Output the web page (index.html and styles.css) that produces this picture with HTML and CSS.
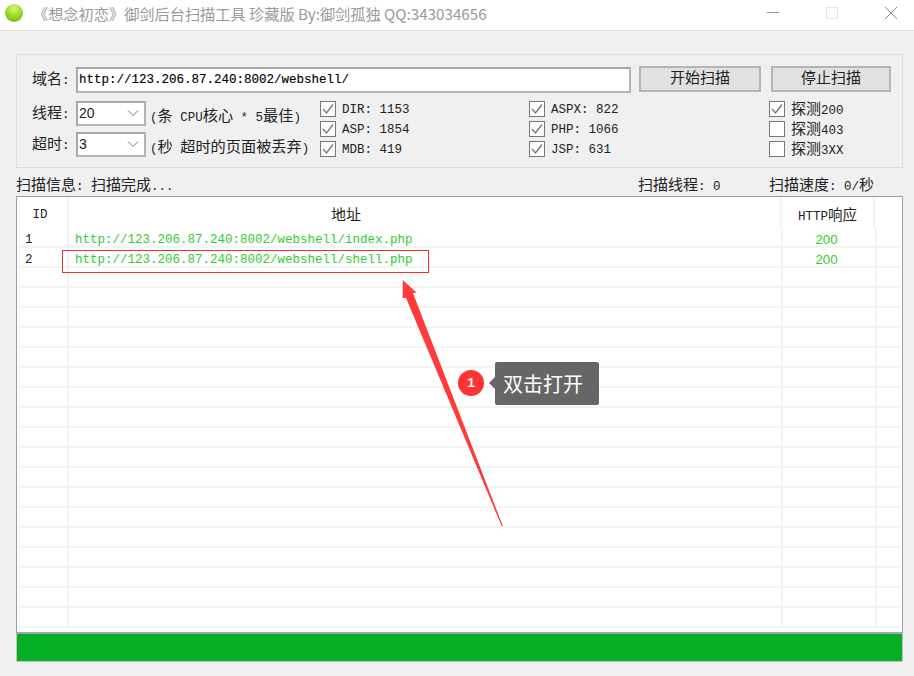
FILE: index.html
```html
<!DOCTYPE html>
<html lang="zh">
<head>
<meta charset="utf-8">
<title>御剑后台扫描工具</title>
<link rel="stylesheet" href="styles.css">
</head>
<body>
<div class="window">
  <header class="titlebar">
    <span class="ball"></span>
    <span class="title">《想念初恋》御剑后台扫描工具 珍藏版 By:御剑孤独 QQ:343034656</span>
    <span class="winbtn win-min"><svg width="14" height="14" viewBox="0 0 14 14"><path d="M0 6.5H12" stroke="#9a9a9a" fill="none"/></svg></span>
    <span class="winbtn win-max"><svg width="14" height="14" viewBox="0 0 14 14"><rect x="1.5" y="1.5" width="11" height="11" stroke="#e6e6e6" fill="none"/></svg></span>
    <span class="winbtn win-close"><svg width="14" height="14" viewBox="0 0 14 14"><path d="M1 1L13 13M13 1L1 13" stroke="#8a8a8a" fill="none"/></svg></span>
  </header>
  <main class="content">
    <section class="group">
      <div class="row-url">
        <label class="lbl">域名<i>:</i></label>
        <div class="field url">http://123.206.87.240:8002/webshell/</div>
        <button class="btn btn-start">开始扫描</button>
        <button class="btn btn-stop">停止扫描</button>
      </div>
      <div class="row-opts">
        <div class="combos">
          <div class="combo-row">
            <label class="lbl">线程<i>:</i></label>
            <div class="field combo"><span>20</span><svg width="12" height="8" viewBox="0 0 12 8"><path d="M1 1.5L6 6.5L11 1.5" stroke="#777" fill="none"/></svg></div>
            <span class="hint"><i>(</i>条<i> CPU</i>核心<i> * 5</i>最佳<i>)</i></span>
          </div>
          <div class="combo-row">
            <label class="lbl">超时<i>:</i></label>
            <div class="field combo"><span>3</span><svg width="12" height="8" viewBox="0 0 12 8"><path d="M1 1.5L6 6.5L11 1.5" stroke="#777" fill="none"/></svg></div>
            <span class="hint"><i>(</i>秒<i> </i>超时的页面被丢弃<i>)</i></span>
          </div>
        </div>
        <div class="checks c1">
          <div class="check"><span class="box on"><svg width="14" height="14" viewBox="0 0 14 14"><path d="M2 7L5.5 11L12 2.5" stroke="#777" stroke-width="1.3" fill="none"/></svg></span><span class="mono">DIR: 1153</span></div>
          <div class="check"><span class="box on"><svg width="14" height="14" viewBox="0 0 14 14"><path d="M2 7L5.5 11L12 2.5" stroke="#777" stroke-width="1.3" fill="none"/></svg></span><span class="mono">ASP: 1854</span></div>
          <div class="check"><span class="box on"><svg width="14" height="14" viewBox="0 0 14 14"><path d="M2 7L5.5 11L12 2.5" stroke="#777" stroke-width="1.3" fill="none"/></svg></span><span class="mono">MDB: 419</span></div>
        </div>
        <div class="checks c2">
          <div class="check"><span class="box on"><svg width="14" height="14" viewBox="0 0 14 14"><path d="M2 7L5.5 11L12 2.5" stroke="#777" stroke-width="1.3" fill="none"/></svg></span><span class="mono">ASPX: 822</span></div>
          <div class="check"><span class="box on"><svg width="14" height="14" viewBox="0 0 14 14"><path d="M2 7L5.5 11L12 2.5" stroke="#777" stroke-width="1.3" fill="none"/></svg></span><span class="mono">PHP: 1066</span></div>
          <div class="check"><span class="box on"><svg width="14" height="14" viewBox="0 0 14 14"><path d="M2 7L5.5 11L12 2.5" stroke="#777" stroke-width="1.3" fill="none"/></svg></span><span class="mono">JSP: 631</span></div>
        </div>
        <div class="checks c3">
          <div class="check"><span class="box on"><svg width="14" height="14" viewBox="0 0 14 14"><path d="M2 7L5.5 11L12 2.5" stroke="#777" stroke-width="1.3" fill="none"/></svg></span><span class="probe">探测<i>200</i></span></div>
          <div class="check"><span class="box"></span><span class="probe">探测<i>403</i></span></div>
          <div class="check"><span class="box"></span><span class="probe">探测<i>3XX</i></span></div>
        </div>
      </div>
    </section>
    <div class="status">
      <span class="st st-info">扫描信息<i>: </i>扫描完成<i>...</i></span>
      <span class="st st-threads">扫描线程<i>: 0</i></span>
      <span class="st st-speed">扫描速度<i>: 0/</i>秒</span>
    </div>
    <section class="list">
      <div class="thead">
        <div class="th th-id">ID</div>
        <div class="th th-addr">地址</div>
        <div class="th th-code"><i>HTTP</i>响应</div>
      </div>
      <div class="tbody">
        <div class="tr"><div class="td id">1</div><div class="td link">http://123.206.87.240:8002/webshell/index.php</div><div class="td code">200</div><div class="td"></div></div>
        <div class="tr"><div class="td id">2</div><div class="td link">http://123.206.87.240:8002/webshell/shell.php</div><div class="td code">200</div><div class="td"></div></div>
        <div class="tr"><div class="td"></div><div class="td"></div><div class="td"></div><div class="td"></div></div>
        <div class="tr"><div class="td"></div><div class="td"></div><div class="td"></div><div class="td"></div></div>
        <div class="tr"><div class="td"></div><div class="td"></div><div class="td"></div><div class="td"></div></div>
        <div class="tr"><div class="td"></div><div class="td"></div><div class="td"></div><div class="td"></div></div>
        <div class="tr"><div class="td"></div><div class="td"></div><div class="td"></div><div class="td"></div></div>
        <div class="tr"><div class="td"></div><div class="td"></div><div class="td"></div><div class="td"></div></div>
        <div class="tr"><div class="td"></div><div class="td"></div><div class="td"></div><div class="td"></div></div>
        <div class="tr"><div class="td"></div><div class="td"></div><div class="td"></div><div class="td"></div></div>
        <div class="tr"><div class="td"></div><div class="td"></div><div class="td"></div><div class="td"></div></div>
        <div class="tr"><div class="td"></div><div class="td"></div><div class="td"></div><div class="td"></div></div>
        <div class="tr"><div class="td"></div><div class="td"></div><div class="td"></div><div class="td"></div></div>
        <div class="tr"><div class="td"></div><div class="td"></div><div class="td"></div><div class="td"></div></div>
        <div class="tr"><div class="td"></div><div class="td"></div><div class="td"></div><div class="td"></div></div>
        <div class="tr"><div class="td"></div><div class="td"></div><div class="td"></div><div class="td"></div></div>
        <div class="tr"><div class="td"></div><div class="td"></div><div class="td"></div><div class="td"></div></div>
        <div class="tr"><div class="td"></div><div class="td"></div><div class="td"></div><div class="td"></div></div>
        <div class="tr"><div class="td"></div><div class="td"></div><div class="td"></div><div class="td"></div></div>
        <div class="tr"><div class="td"></div><div class="td"></div><div class="td"></div><div class="td"></div></div>
      </div>
    </section>
    <div class="progress"></div>
  </main>
</div>
<div class="mark-rect"></div>
<svg class="arrow" width="914" height="676" viewBox="0 0 914 676"><polygon points="402.7,280 416.7,292.7 413,293 502.8,526 501.6,526 406,298 402.7,298" fill="#ff3b3b"/></svg>
<div class="badge">1</div>
<div class="tip">双击打开</div>
</body>
</html>
```
FILE: styles.css
```css
* { box-sizing: border-box; }
html, body { margin: 0; height: 100%; }
body { background: #f0f0f0; overflow: hidden; font-family: "Noto Sans CJK SC", "Liberation Sans", sans-serif; font-size: 15px; color: #222; }
i { font-style: normal; font-family: "Liberation Mono", monospace; font-size: 12.5px; white-space: pre; }
.window { display: flex; flex-direction: column; height: 676px; }

.titlebar { height: 31px; flex: none; display: flex; align-items: center; background: #fff; border-bottom: 1px solid #e2e2e2; padding-left: 5px; }
.ball { width: 18px; height: 18px; border-radius: 50%; flex: none; margin-top: -5px; background: radial-gradient(circle at 50% 25%, #d4f27a 0%, #9fdc2a 45%, #66ac0e 100%); }
.title { margin-left: 10px; margin-top: -5px; font-size: 15.2px; color: #9a9a9a; white-space: nowrap; flex: 1; }
.winbtn { width: 14px; height: 14px; display: block; flex: none; margin-top: -5px; }
.winbtn svg { display: block; }
.win-min { margin-right: 44px; }
.win-max { margin-right: 45px; }
.win-close { margin-right: 16px; }

.content { flex: 1; padding: 23px 11px 15px 16px; display: flex; flex-direction: column; }

.group { height: 114px; border: 1px solid #dcdcdc; padding: 11px 10px 0 14px; flex: none; }
.row-url { display: flex; align-items: center; height: 27px; }
.lbl { width: 45px; flex: none; line-height: 20px; white-space: pre; padding-left: 1px; }
.field { background: #fff; border: 2px solid #a8a8a8; border-right-color: #b4b4b4; border-bottom-color: #b4b4b4; }
.url { width: 555px; height: 26px; margin-top: 1px; font: 12.5px/22px "Liberation Mono", monospace; padding-left: 1px; color: #000; -webkit-text-stroke: 0.15px #000; }
.btn { height: 26px; border: 2px solid #b5b5b5; background: #e1e1e1; font: 15px/18px "Noto Sans CJK SC", sans-serif; color: #222; padding: 0 0 3px; margin-bottom: 2px; }
.btn-start { width: 122px; margin-left: 8px; }
.btn-stop { width: 120px; margin-left: 10px; }

.row-opts { display: flex; margin-top: 8px; }
.combos { width: 289px; flex: none; }
.combo-row { display: flex; align-items: center; height: 25px; margin-bottom: 6px; }
.combo { width: 70px; height: 25px; display: flex; align-items: center; justify-content: space-between; padding: 0 5px 2px 1px; font: 14px "Liberation Sans", sans-serif; flex: none; }
.hint { white-space: nowrap; margin-left: 4px; font-size: 15.2px; }

.checks { flex: none; display: flex; flex-direction: column; gap: 4px; }
.c1 { width: 209px; }
.c2 { width: 240px; }
.check { display: flex; align-items: center; height: 16px; }
.box { width: 16px; height: 16px; flex: none; background: #fff; border: 1px solid #777; display: block; }
.box.on { background: #fdfdfd; }
.box svg { display: block; }
.mono { margin: 2px 0 0 6px; font: 12.5px "Liberation Mono", monospace; color: #222; white-space: nowrap; }
.probe { margin-left: 6px; white-space: nowrap; line-height: 16px; }

.status { height: 28px; flex: none; display: flex; align-items: center; padding-top: 2px; }
.st { white-space: nowrap; }
.st-info { width: 622px; }
.st-threads { width: 131px; }

.list { flex: none; height: 438px; background: #fff; border: 1px solid #9aa0ad; border-bottom: 2px solid #a6a6a6; padding: 0 1px; }
.thead { display: grid; grid-template-columns: 51px 713px 93px; height: 31px; }
.th { text-align: center; border-right: 2px solid #f4f4f4; color: #222; height: 31px; overflow: hidden; white-space: nowrap; }
.th-id { font: 12.5px/36px "Liberation Mono", monospace; padding-right: 5px; }
.th-addr { text-align: left; padding-left: 262px; line-height: 33px; }
.th-code { font-size: 14.5px; line-height: 33px; }
.tr { display: grid; grid-template-columns: 51px 714px 94px 25px; height: 20px; border-bottom: 2px solid #f4f4f4; }
.td { height: 20px; border-right: 2px solid #f4f4f4; white-space: nowrap; overflow: visible; }
.td:last-child { border-right: 0; }
.id { font: 12.5px/25px "Liberation Mono", monospace; padding-left: 7px; }
.link { font: 12.5px/25px "Liberation Mono", monospace; color: #33cc33; padding-left: 6px; }
.code { font: 13.3px/24px "Liberation Sans", sans-serif; color: #33cc33; text-align: center; padding-right: 5px; }

.progress { flex: none; height: 28px; background: #05ae24; border: 1px solid #c4c4c4; border-top: 0; }

.mark-rect { position: absolute; left: 62px; top: 250px; width: 367px; height: 23px; border: 1px solid #f23030; }
.arrow { position: absolute; left: 0; top: 0; pointer-events: none; }
.badge { position: absolute; left: 458px; top: 370px; width: 26px; height: 26px; border-radius: 50%; background: #fb3434; color: #fff; font: 700 13px/26px "Liberation Sans", sans-serif; text-align: center; }
.tip { position: absolute; left: 495px; top: 362px; width: 104px; height: 43px; padding-left: 8px; background: #666; border-radius: 2px; color: #fff; font-size: 20px; line-height: 43px; }
.tip::before { content: ""; position: absolute; left: -6px; top: 15px; border: 6px solid transparent; border-left: 0; border-right-color: #666; }
```
